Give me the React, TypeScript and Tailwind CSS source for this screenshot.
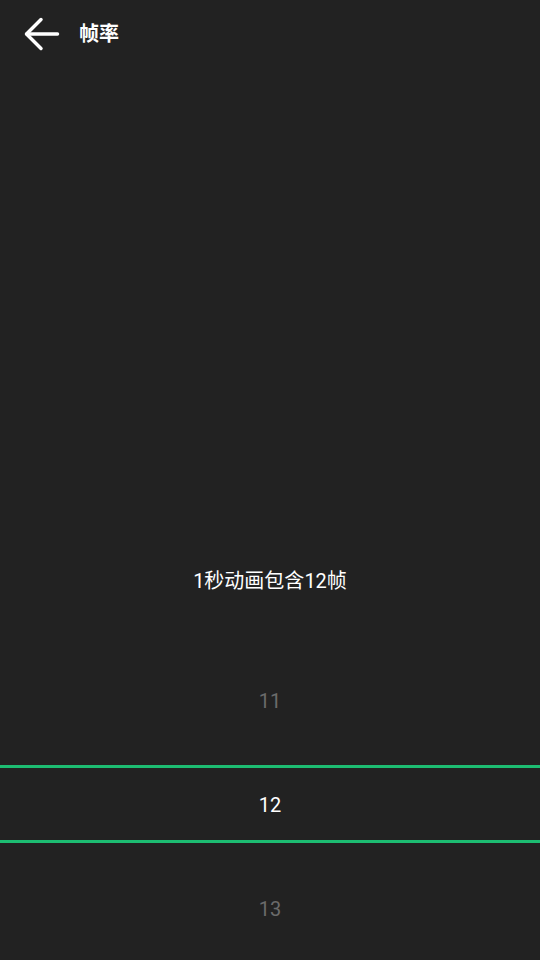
import { useState } from "react"

const FONT = { fontFamily: "Roboto, 'Noto Sans CJK SC', sans-serif" }

// ─── Header ────────────────────────────────────────────────────────────────────

function BackArrow() {
  return (
    <svg width="36" height="34" viewBox="0 0 36 34" fill="none" stroke="white" strokeWidth="3.5" strokeLinecap="round" strokeLinejoin="round">
      <path d="M33.5 17H3" />
      <path d="M17 2.5L2.5 17 17 31.5" />
    </svg>
  )
}

// ─── Picker ────────────────────────────────────────────────────────────────────

function PickerRow({ value, dim }: { value: number; dim?: boolean }) {
  return (
    <div className={`h-[104px] flex items-center justify-center pt-[2px] text-[20px] ${dim ? "text-[#6b6b6b]" : "text-white"}`}>
      {value}
    </div>
  )
}

export default function App() {
  const [fps] = useState(12)

  return (
    <div className="w-[540px] h-[960px] bg-[#222222] flex flex-col overflow-hidden" style={FONT}>
      {/* Header */}
      <div className="h-[68px] flex items-center pl-[24px] shrink-0">
        <BackArrow />
        <span className="ml-[19px] text-white text-[20px] font-bold leading-none">帧率</span>
      </div>

      {/* Description */}
      <div className="flex-1 flex items-end justify-center pb-[52px]">
        <p className="text-white text-[20px] leading-[30px]">1秒动画包含{fps}帧</p>
      </div>

      {/* Wheel */}
      <div className="shrink-0">
        <PickerRow value={fps - 1} dim />
        <div className="py-[13px]">
          <div className="h-[78px] border-y-[3px] border-[#1dbd72] flex items-center justify-center pt-[2px] text-white text-[20px]">
            {fps}
          </div>
        </div>
        <PickerRow value={fps + 1} dim />
      </div>
    </div>
  )
}
